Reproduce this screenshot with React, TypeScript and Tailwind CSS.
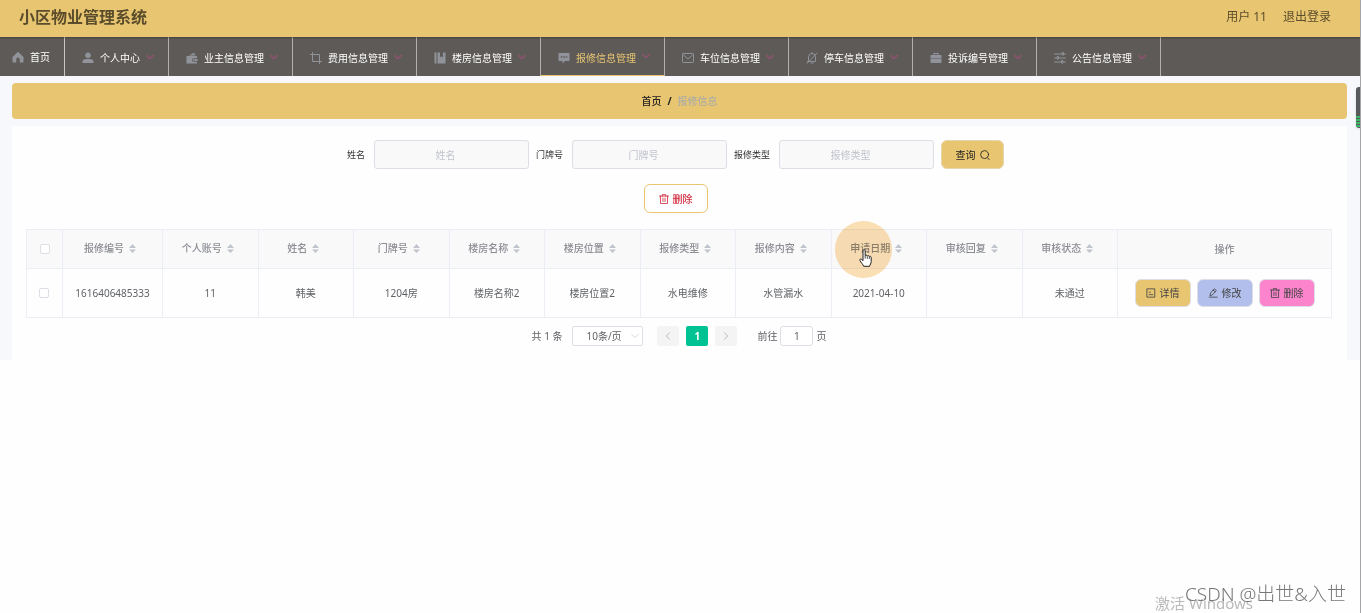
import type { ReactNode } from "react";
import clsx from "clsx";

type IconProps = { className?: string };

const Svg = ({ className, children, filled }: IconProps & { children: ReactNode; filled?: boolean }) => (
  <svg
    viewBox="0 0 24 24"
    aria-hidden="true"
    className={clsx("shrink-0", className)}
    fill={filled ? "currentColor" : "none"}
    stroke={filled ? "none" : "currentColor"}
    strokeWidth={2}
    strokeLinecap="round"
    strokeLinejoin="round"
  >
    {children}
  </svg>
);

const HomeIcon = () => (
  <Svg filled className="size-3">
    <path d="M12 1.5 1.5 11.5a1 1 0 0 0-.5.8V22a1 1 0 0 0 1 1h6.5v-6.5a3.5 3.5 0 0 1 7 0V23H22a1 1 0 0 0 1-1v-9.7a1 1 0 0 0-.5-.8z" />
  </Svg>
);

const UserIcon = () => (
  <Svg filled className="size-3">
    <circle cx="12" cy="6.5" r="5.5" />
    <path d="M1 22v-2.5C1 15.5 4 14 8 14h8c4 0 7 1.5 7 5.5V22z" />
  </Svg>
);

const WalletIcon = () => (
  <Svg filled className="size-3">
    <path d="M5 7 16.5 1.5 19 7z" />
    <path
      fillRule="evenodd"
      d="M1 8h21v4.5h-6.5a3.5 3.5 0 0 0 0 7H22V23H1zm14.5 6H23v4h-7.5a2 2 0 0 1 0-4zm.5 1.2v1.6h2v-1.6z"
    />
  </Svg>
);

const CropIcon = () => (
  <Svg className="size-3">
    <path d="M1 5h18v18M5 1v18h18" />
  </Svg>
);

const NotebookIcon = () => (
  <Svg filled className="size-3">
    <path d="M1 1h4v22H1zM7 1h5v10l3-2.5 3 2.5V1h5v22H7z" />
  </Svg>
);

const CommentIcon = () => (
  <Svg filled className="size-3">
    <path
      fillRule="evenodd"
      d="M2 2h20a1 1 0 0 1 1 1v14a1 1 0 0 1-1 1h-8l-5 5v-5H2a1 1 0 0 1-1-1V3a1 1 0 0 1 1-1zm3.500 6.500v3h3v-3zm5 0v3h3v-3zm5 0v3h3v-3z"
    />
  </Svg>
);

const MessageIcon = () => (
  <Svg className="size-3">
    <rect x="1" y="3" width="22" height="18" rx="1.5" />
    <path d="m3 6 9 8 9-8" />
  </Svg>
);

const MuteIcon = () => (
  <Svg className="size-3">
    <path d="M5 17v-7a7 7 0 0 1 14 0v9H3M12 1v2M10 22h4M2 23 22 2" />
  </Svg>
);

const SuitcaseIcon = () => (
  <Svg filled className="size-3">
    <path fillRule="evenodd" d="M7 6V2h10v4h5a1 1 0 0 1 1 1v6H1V7a1 1 0 0 1 1-1zm2-2v2h6V4z" />
    <path d="M1 14h22v8H1z" />
  </Svg>
);

const OperationIcon = () => (
  <Svg className="size-3">
    <path d="M1 4h14M20 4h3M1 12h4M10 12h13M1 20h13M19 20h4" />
    <path d="M16 2v4h3V2zM6 10v4h3v-4zM15 18v4h3v-4z" />
  </Svg>
);

const ChevronDown = ({ className }: IconProps) => (
  <Svg className={className}>
    <path d="m2 7 10 10L22 7" />
  </Svg>
);

const SearchIcon = () => (
  <Svg className="size-[10px]">
    <circle cx="11" cy="11" r="9.5" />
    <path d="m17.5 18 4.5 5" />
  </Svg>
);

const TrashIcon = () => (
  <Svg className="size-[10px]">
    <path d="M1 5h22M8 5V1.5h8V5M3.500 5v18h17V5M9.500 10v8M14.500 10v8" />
  </Svg>
);

const TicketIcon = () => (
  <Svg className="size-[10px]">
    <path d="M3 2h18v20H3zM7.500 10h3M7.500 16h9" />
  </Svg>
);

const EditIcon = () => (
  <Svg className="size-[10px]">
    <path d="M3 22h19M5 18l1-6L15 2l5 4-9 10zM12 5l5 4" />
  </Svg>
);

const SortCarets = () => (
  <span className="flex w-[17px] justify-center">
    <svg viewBox="0 0 7 9" className="h-[9px] w-[7px]" fill="#c0c4cc" aria-hidden="true">
      <path d="M0 4 3.500 0 7 4zM0 5.500h7L3.500 9z" />
    </svg>
  </span>
);

const NAV_ITEMS = [
  { label: "个人中心", icon: <UserIcon /> },
  { label: "业主信息管理", icon: <WalletIcon /> },
  { label: "费用信息管理", icon: <CropIcon /> },
  { label: "楼房信息管理", icon: <NotebookIcon /> },
  { label: "报修信息管理", icon: <CommentIcon />, active: true },
  { label: "车位信息管理", icon: <MessageIcon /> },
  { label: "停车信息管理", icon: <MuteIcon /> },
  { label: "投诉编号管理", icon: <SuitcaseIcon /> },
  { label: "公告信息管理", icon: <OperationIcon /> },
];

const FILTERS = [
  { id: "name", label: "姓名" },
  { id: "door", label: "门牌号" },
  { id: "type", label: "报修类型" },
];

const COLUMNS = [
  "报修编号",
  "个人账号",
  "姓名",
  "门牌号",
  "楼房名称",
  "楼房位置",
  "报修类型",
  "报修内容",
  "申请日期",
  "审核回复",
  "审核状态",
];

const ROWS = [
  ["1616406485333", "11", "韩美", "1204房", "楼房名称2", "楼房位置2", "水电维修", "水管漏水", "2021-04-10", "", "未通过"],
];

const ACTIONS = [
  { label: "详情", icon: <TicketIcon />, color: "bg-[#e8c571]" },
  { label: "修改", icon: <EditIcon />, color: "bg-[#b2bfec]" },
  { label: "删除", icon: <TrashIcon />, color: "bg-[#fb84cc]" },
];

const Checkbox = ({ label }: { label: string }) => (
  <input
    type="checkbox"
    aria-label={label}
    className="block mx-auto size-[10px] appearance-none rounded-[2px] border border-[#dcdfe6] bg-white checked:bg-[#00c292]"
  />
);

const Header = () => (
  <header className="relative z-10 flex h-[37px] items-center justify-between bg-[#e8c571] pb-1 pl-[19px] pr-[29px] text-[#5b4d2b] shadow-[0_1px_2px_rgba(0,0,0,0.3)]">
    <h1 className="text-base font-bold">小区物业管理系统</h1>
    <div className="flex gap-4 text-xs">
      <span>用户 11</span>
      <a href="#logout">退出登录</a>
    </div>
  </header>
);

const Nav = () => (
  <nav className="flex h-[39px] bg-[#5d5a58] text-white">
    <a href="#home" className="flex items-center gap-1 border-r border-[#c9c7c6] pl-[9px] pr-[14px]">
      <span className="flex w-[17px] justify-center text-[#909399]">
        <HomeIcon />
      </span>
      首页
    </a>
    {NAV_ITEMS.map((item) => (
      <button
        key={item.label}
        type="button"
        className={clsx(
          "flex items-center border-r border-r-[#b3b1b0] pl-[14px] pr-[14px] pt-[3px]",
          item.active && "border-b border-b-[#e8c571] text-[#e8c571]",
        )}
      >
        <span className="mr-1 flex w-[17px] justify-center text-[#909399]">{item.icon}</span>
        {item.label}
        <ChevronDown className="mb-[3px] ml-[6px] size-2 stroke-3 text-[#c24a86]" />
      </button>
    ))}
  </nav>
);

const Filters = () => (
  <form className="flex justify-center" onSubmit={(e) => e.preventDefault()}>
    {FILTERS.map((f) => (
      <div key={f.id} className="mr-[7px] flex items-center">
        <label htmlFor={f.id} className="pr-[9px] text-[9px] text-[#303133]">
          {f.label}
        </label>
        <input
          id={f.id}
          placeholder={f.label}
          className="h-[29px] w-[155px] rounded-[3px] border border-[#dcdfe6] bg-[#f9f9fa] pl-3 pr-6 text-center outline-none placeholder:text-[#c0c4cc]"
        />
      </div>
    ))}
    <button
      type="submit"
      className="mr-[7px] flex h-[29px] w-[63px] items-center justify-center gap-1 rounded-md border border-[#e6d6ab] bg-[#e8c571] text-[#222]"
    >
      查询
      <SearchIcon />
    </button>
  </form>
);

const RepairTable = () => (
  <table className="mt-4 w-full table-fixed border-collapse border border-[#ebeef5] text-center">
    <colgroup>
      <col className="w-9" />
      <col className="w-[100px]" />
      {COLUMNS.slice(1).map((c) => (
        <col key={c} />
      ))}
      <col className="w-[214px]" />
    </colgroup>
    <thead>
      <tr className="h-[39px] bg-[#f9f9fa] text-[#8b8d93]">
        <th className="border border-[#ebeef5]">
          <Checkbox label="全选" />
        </th>
        {COLUMNS.map((c) => (
          <th key={c} className="border border-[#ebeef5] pb-[2px] font-medium">
            <span className="flex items-center justify-center">
              {c}
              <SortCarets />
            </span>
          </th>
        ))}
        <th className="border border-[#ebeef5] font-medium">操作</th>
      </tr>
    </thead>
    <tbody>
      {ROWS.map((row) => (
        <tr key={row[0]} className="h-[49px] text-[#606266]">
          <td className="border border-[#ebeef5] pr-[2px]">
            <Checkbox label={row[0]} />
          </td>
          {row.map((cell, i) => (
            <td key={COLUMNS[i]} className="border border-[#ebeef5]">
              {cell}
            </td>
          ))}
          <td className="border border-[#ebeef5]">
            <div className="flex justify-center gap-[6px]">
              {ACTIONS.map((a) => (
                <button
                  key={a.label}
                  type="button"
                  className={clsx(
                    "flex h-7 w-14 items-center justify-center gap-1 rounded-md border border-[#dcdfe6] text-[#444]",
                    a.color,
                  )}
                >
                  {a.icon}
                  {a.label}
                </button>
              ))}
            </div>
          </td>
        </tr>
      ))}
    </tbody>
  </table>
);

const Pagination = () => (
  <div className="mt-2 flex h-5 items-center justify-center text-[#606266]">
    <span>共 1 条</span>
    <div className="relative ml-[10px]">
      <select
        aria-label="每页条数"
        className="block h-5 w-[71px] appearance-none rounded-[2px] border border-[#dcdfe6] bg-white pl-[13px] outline-none"
      >
        <option>10条/页</option>
        <option>20条/页</option>
      </select>
      <ChevronDown className="pointer-events-none absolute right-1 top-[6px] size-2 text-[#c0c4cc]" />
    </div>
    <button
      type="button"
      aria-label="上一页"
      className="ml-[14px] flex h-5 w-[22px] items-center justify-center rounded-[2px] bg-[#f4f4f5] text-[#b4b7be]"
    >
      <ChevronDown className="size-2 rotate-90 stroke-3" />
    </button>
    <button type="button" className="ml-[7px] h-5 w-[22px] rounded-[2px] bg-[#00c292] font-bold text-white">
      1
    </button>
    <button
      type="button"
      aria-label="下一页"
      className="ml-[7px] flex h-5 w-[22px] items-center justify-center rounded-[2px] bg-[#f4f4f5] text-[#b4b7be]"
    >
      <ChevronDown className="size-2 -rotate-90 stroke-3" />
    </button>
    <label htmlFor="page" className="ml-5">
      前往
    </label>
    <input
      id="page"
      defaultValue="1"
      className="mx-[3px] h-5 w-[33px] rounded-[3px] border border-[#dcdfe6] bg-white text-center outline-none"
    />
    <span>页</span>
  </div>
);

const Pointer = () => (
  <>
    <div className="pointer-events-none absolute left-[835px] top-[221px] size-[57px] rounded-full bg-[#fce0b5] mix-blend-multiply" />
    <svg
      viewBox="0 0 13 19"
      className="pointer-events-none absolute left-[859px] top-[249px] h-[19px] w-[13px]"
      aria-hidden="true"
    >
      <path
        d="M4 1.800c0-1.700 2.200-1.700 2.200 0v5c.2-.9 2-.8 2.100.3.300-.8 1.900-.6 2 .5.500-.7 1.900-.3 1.900.9v4c0 2-1.200 3.100-1.700 4.800H4.700C4 15.300 2 13.600 1 11.500.4 10.300 1.700 9.400 2.700 10.400L4 11.700z"
        fill="#fff"
        stroke="#222"
        strokeWidth="1"
        strokeLinejoin="round"
      />
      <path d="M6.200 7v2.500M8.300 7.300v2.500M10.300 8v2" stroke="#222" strokeWidth=".8" />
    </svg>
  </>
);

const SideMeter = () => (
  <div className="absolute -right-px top-[87px] flex h-[41px] w-[5px] flex-col justify-end gap-px overflow-hidden rounded-l-[3px] bg-[#58595a] py-px shadow">
    {[0, 1, 2, 3].map((i) => (
      <span key={i} className="h-[2px] bg-[#3fb768]" />
    ))}
  </div>
);

const App = () => {
  return (
    <div
      lang="zh-CN"
      className="relative min-h-screen overflow-hidden border-r border-[#a5a5a8] bg-[#fefefe] font-['Noto_Sans','Noto_Sans_CJK_SC',sans-serif] text-[10px] leading-4"
    >
      <Header />
      <Nav />
      <main className="bg-[#f6f8fc] pl-3 pr-[13px] pt-[7px]">
        <div className="flex h-9 items-center justify-center gap-[6px] rounded bg-[#e8c571]">
          <a href="#home" className="font-medium text-[#222]">
            首页
          </a>
          <span className="font-bold text-[#222]">/</span>
          <span className="text-[#a3a9ad]">报修信息</span>
        </div>
        <section className="mt-[7px] bg-[#fefefe] pb-[14px] pl-[14px] pr-[15px] pt-[14px]">
          <Filters />
          <div className="mt-[15px] flex justify-center">
            <button
              type="button"
              className="mr-[7px] flex h-[29px] w-16 items-center justify-center gap-1 rounded-md border border-[#e8c571] bg-white font-medium text-[#d0283c]"
            >
              <TrashIcon />
              删除
            </button>
          </div>
          <RepairTable />
          <Pagination />
        </section>
      </main>

      <Pointer />
      <SideMeter />
      <p className="absolute bottom-[2px] right-[107px] text-[15px] leading-4 text-[#b9b9b9]">激活 Windows</p>
      <p className="absolute bottom-[7px] right-[14px] text-[19px] leading-6 font-light text-[#777]">CSDN @出世&amp;入世</p>
    </div>
  );
};

export default App;
